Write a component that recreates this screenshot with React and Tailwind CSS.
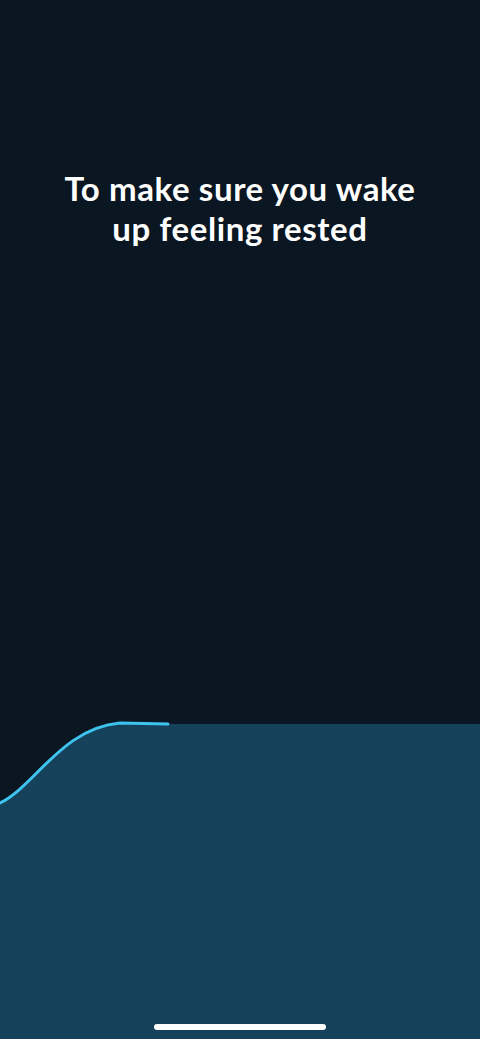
export default function App() {
  return (
    <div className="w-[480px] h-[1039px] flex flex-col bg-[#0a1621] overflow-hidden">
      <div className="pt-[168px] px-6 text-center">
        <h1
          className="text-white text-[33px] leading-[40px] font-bold tracking-[0.6px]"
          style={{ fontFamily: "Lato, 'Noto Sans', sans-serif" }}
        >
          To make sure you wake
          <br />
          up feeling rested
        </h1>
      </div>

      <div className="flex-1" />

      <svg width="480" height="90" viewBox="0 0 480 90" className="block">
        <path
          d="M0 85 C35 68 62 10 120 5 L168 6 L480 6 L480 90 L0 90 Z"
          fill="#15425a"
        />
        <path
          d="M0 85 C35 68 62 10 120 5 L168 6"
          fill="none"
          stroke="#3ec3ef"
          strokeWidth="3"
          strokeLinecap="round"
        />
      </svg>

      <div className="h-[231px] bg-[#15425a] flex flex-col justify-end items-center pb-[9px]">
        <div className="w-[172px] h-[6px] rounded-full bg-white" />
      </div>
    </div>
  );
}
